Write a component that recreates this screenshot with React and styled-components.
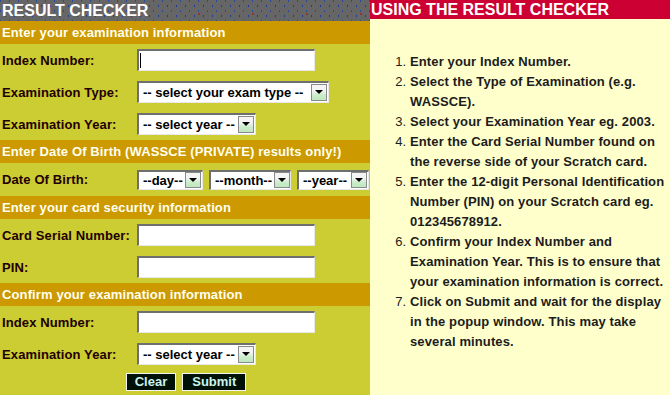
import React from "react";
import styled, { createGlobalStyle } from "styled-components";

const GlobalStyle = createGlobalStyle`
  html, body {
    margin: 0;
    padding: 0;
    background: #ffffcc;
  }
  body {
    font-family: "Liberation Sans", Arial, sans-serif;
  }
`;

const Page = styled.div`
  display: flex;
  width: 670px;
  height: 395px;
  overflow: hidden;
`;

const LeftPanel = styled.div`
  width: 370px;
  flex-shrink: 0;
  background: #cccc33;
  display: flex;
  flex-direction: column;
`;

const RightPanel = styled.div`
  flex: 1;
  background: #ffffcc;
  display: flex;
  flex-direction: column;
`;

const TitleBar = styled.div`
  height: 21px;
  padding-left: 2px;
  display: flex;
  align-items: center;
  background-color: #666666;
  background-image: radial-gradient(circle, #1c3c9c 0.9px, transparent 1.1px),
    radial-gradient(circle, #2a4aa0 0.9px, transparent 1.1px),
    radial-gradient(circle, #a03030 0.9px, transparent 1.1px);
  background-size: 9px 10px, 9px 10px, 54px 20px;
  background-position: 1px 1px, 5px 6px, 10px 4px;
  color: #ffffff;
  font: bold 16px "Liberation Sans", Arial, sans-serif;
  white-space: nowrap;
`;

const RedBar = styled.div`
  height: 19px;
  padding-left: 1px;
  display: flex;
  align-items: center;
  background: #cc0033;
  color: #ffffff;
  font: bold 16px "Liberation Sans", Arial, sans-serif;
  white-space: nowrap;
`;

const SectionBar = styled.div`
  height: 23px;
  padding-left: 2px;
  display: flex;
  align-items: center;
  background: #cc9900;
  color: #fffff0;
  font: bold 13px "Liberation Sans", Arial, sans-serif;
  letter-spacing: 0.12px;
  white-space: nowrap;
`;

const FieldRow = styled.div`
  height: ${(p) => p.$h || 32}px;
  display: grid;
  grid-template-columns: 135px 1fr;
  align-items: center;
  padding-left: 2px;
`;

const Label = styled.span`
  color: #220000;
  font: bold 13px "Liberation Sans", Arial, sans-serif;
  letter-spacing: 0.12px;
  white-space: nowrap;
`;

const Controls = styled.div`
  display: flex;
  align-items: center;
  gap: 6px;
`;

const TextBox = styled.div`
  box-sizing: border-box;
  width: ${(p) => p.$w}px;
  height: 22px;
  background: #ffffff;
  border-top: 2px solid #6f6f6f;
  border-left: 2px solid #6f6f6f;
  border-right: 1px solid #e8e8e8;
  border-bottom: 1px solid #e8e8e8;
  display: flex;
  align-items: center;
  padding-left: 1px;
`;

const Caret = styled.span`
  width: 1px;
  height: 15px;
  background: #000000;
`;

const SelectBox = styled.div`
  box-sizing: border-box;
  width: ${(p) => p.$w}px;
  height: ${(p) => p.$h || 22}px;
  background: #ffffff;
  border-top: 2px solid #6f6f6f;
  border-left: 2px solid #6f6f6f;
  border-right: 1px solid #e8e8e8;
  border-bottom: 1px solid #e8e8e8;
  display: flex;
  align-items: center;
  justify-content: space-between;
  gap: 2px;
  padding: 0 1px 0 4px;
  color: #000000;
  font: bold 13px "Liberation Sans", Arial, sans-serif;
  white-space: nowrap;
  overflow: hidden;
`;

const ArrowButton = styled.span`
  box-sizing: border-box;
  width: 16px;
  height: ${(p) => p.$h || 17}px;
  flex-shrink: 0;
  border: 1px solid #8a8a8a;
  background: linear-gradient(#f4f4f4 0%, #f4f4f4 35%, #c8ecc8 70%, #c0e8c0 100%);
  display: flex;
  justify-content: center;
  padding-top: 5px;
`;

const Triangle = styled.span`
  width: 0;
  height: 0;
  border-left: 4px solid transparent;
  border-right: 4px solid transparent;
  border-top: 4px solid #000000;
`;

const ButtonRow = styled.div`
  display: flex;
  justify-content: center;
  gap: 6px;
  padding-top: 3px;
  padding-left: 2px;
`;

const Button = styled.button`
  height: 18px;
  padding: 0 ${(p) => p.$pad || 8}px;
  background: #001108;
  border: 1px solid #f4f4f4;
  color: #ccf4ee;
  font: bold 13px "Liberation Sans", Arial, sans-serif;
  line-height: 14px;
  cursor: pointer;
`;

const Steps = styled.ol`
  margin: 33px 0 0 0;
  padding: 0 3px 0 40px;
  list-style: decimal;
  color: #1c1c1c;
  font: 13px/20px "Liberation Sans", Arial, sans-serif;
  letter-spacing: 0.12px;
`;

const Step = styled.li`
  font-weight: normal;
`;

const StepText = styled.span`
  font-weight: bold;
`;

function Select({ text, w, h }) {
  return (
    <SelectBox $w={w} $h={h}>
      {text}
      <ArrowButton $h={h ? h - 4 : 17}>
        <Triangle />
      </ArrowButton>
    </SelectBox>
  );
}

const steps = [
  "Enter your Index Number.",
  "Select the Type of Examination (e.g. WASSCE).",
  "Select your Examination Year eg. 2003.",
  "Enter the Card Serial Number found on the reverse side of your Scratch card.",
  "Enter the 12-digit Personal Identification Number (PIN) on your Scratch card eg. 012345678912.",
  "Confirm your Index Number and Examination Year. This is to ensure that your examination information is correct.",
  "Click on Submit and wait for the display in the popup window. This may take several minutes.",
];

export default function App() {
  return (
    <Page>
      <GlobalStyle />
      <LeftPanel>
        <TitleBar>RESULT CHECKER</TitleBar>

        <SectionBar>Enter your examination information</SectionBar>
        <FieldRow>
          <Label>Index Number:</Label>
          <TextBox $w={178}>
            <Caret />
          </TextBox>
        </FieldRow>
        <FieldRow>
          <Label>Examination Type:</Label>
          <Select text="-- select your exam type --" w={192} />
        </FieldRow>
        <FieldRow>
          <Label>Examination Year:</Label>
          <Select text="-- select year --" w={119} />
        </FieldRow>

        <SectionBar>Enter Date Of Birth (WASSCE (PRIVATE) results only!)</SectionBar>
        <FieldRow $h={33}>
          <Label>Date Of Birth:</Label>
          <Controls>
            <Select text="--day--" w={66} h={20} />
            <Select text="--month--" w={82} h={20} />
            <Select text="--year--" w={72} h={20} />
          </Controls>
        </FieldRow>

        <SectionBar>Enter your card security information</SectionBar>
        <FieldRow>
          <Label>Card Serial Number:</Label>
          <TextBox $w={178} />
        </FieldRow>
        <FieldRow>
          <Label>PIN:</Label>
          <TextBox $w={178} />
        </FieldRow>

        <SectionBar>Confirm your examination information</SectionBar>
        <FieldRow>
          <Label>Index Number:</Label>
          <TextBox $w={178} />
        </FieldRow>
        <FieldRow>
          <Label>Examination Year:</Label>
          <Select text="-- select year --" w={119} />
        </FieldRow>

        <ButtonRow>
          <Button $pad={8}>Clear</Button>
          <Button $pad={9}>Submit</Button>
        </ButtonRow>
      </LeftPanel>

      <RightPanel>
        <RedBar>USING THE RESULT CHECKER</RedBar>
        <Steps>
          {steps.map((s, i) => (
            <Step key={i}>
              <StepText>{s}</StepText>
            </Step>
          ))}
        </Steps>
      </RightPanel>
    </Page>
  );
}
